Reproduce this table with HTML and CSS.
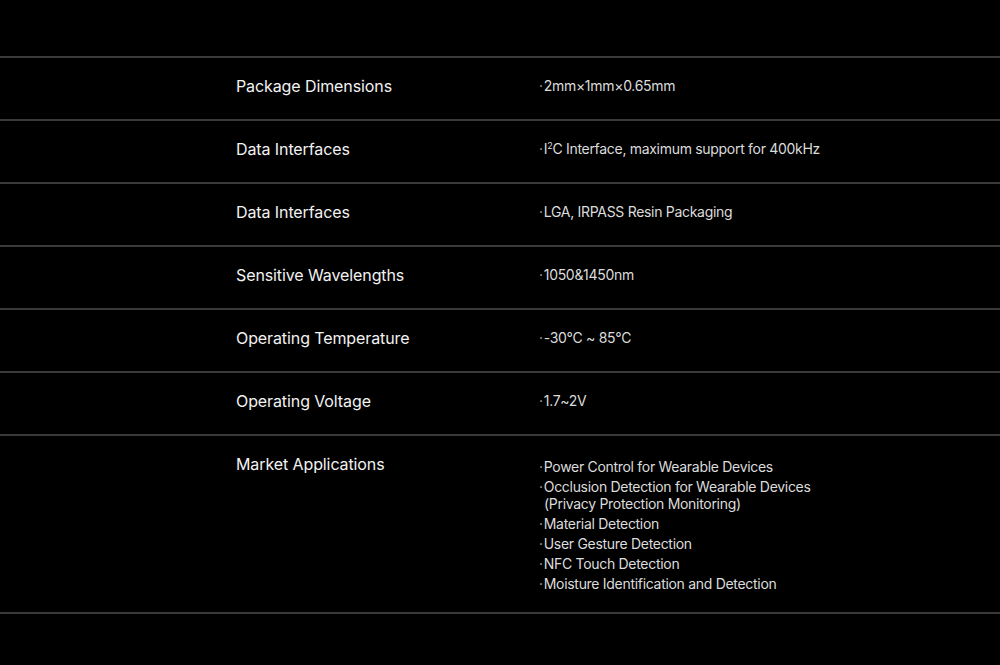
FILE: index.html
```html
<!DOCTYPE html>
<html lang="en">
<head>
<meta charset="utf-8">
<title>Specifications</title>
<link rel="stylesheet" href="styles.css">
</head>
<body>
<section class="specs">
  <div class="row">
    <div class="label">Package Dimensions</div>
    <div class="value"><span class="dot">·</span>2mm×1mm×0.65mm</div>
  </div>
  <div class="row">
    <div class="label">Data Interfaces</div>
    <div class="value"><span class="dot">·</span>I<sup>2</sup>C Interface, maximum support for 400kHz</div>
  </div>
  <div class="row">
    <div class="label">Data Interfaces</div>
    <div class="value"><span class="dot">·</span>LGA, IRPASS Resin Packaging</div>
  </div>
  <div class="row">
    <div class="label">Sensitive Wavelengths</div>
    <div class="value"><span class="dot">·</span>1050&amp;1450nm</div>
  </div>
  <div class="row">
    <div class="label">Operating Temperature</div>
    <div class="value"><span class="dot">·</span>-30°C ~ 85°C</div>
  </div>
  <div class="row">
    <div class="label">Operating Voltage</div>
    <div class="value"><span class="dot">·</span>1.7~2V</div>
  </div>
  <div class="row row-list">
    <div class="label">Market Applications</div>
    <ul class="list">
      <li>Power Control for Wearable Devices</li>
      <li>Occlusion Detection for Wearable Devices (Privacy Protection Monitoring)</li>
      <li>Material Detection</li>
      <li>User Gesture Detection</li>
      <li>NFC Touch Detection</li>
      <li>Moisture Identification and Detection</li>
    </ul>
  </div>
</section>
</body>
</html>
```
FILE: styles.css
```css
html, body {
  margin: 0;
  padding: 0;
  background: #000;
}
body {
  font-family: Inter, "Noto Sans", "Liberation Sans", sans-serif;
  color: #f0f0f0;
  width: 1000px;
  height: 665px;
  overflow: hidden;
}
.specs {
  padding-top: 56px;
}
.row {
  display: grid;
  grid-template-columns: 303px 1fr;
  padding: 17px 0 0 236px;
  height: 44px;
  border-top: 2px solid #3a3a3a;
}
.row-list {
  height: auto;
  padding-bottom: 17px;
  border-bottom: 2px solid #3a3a3a;
}
.label {
  font-size: 16px;
  line-height: 22px;
  letter-spacing: -0.1px;
  color: #f2f2f2;
}
.value {
  font-size: 14px;
  line-height: 22px;
  letter-spacing: -0.3px;
  color: #dcdcdc;
}
.dot {
  color: #aaa;
  margin-right: 1px;
}
.value sup {
  font-size: 9px;
  line-height: 0;
  vertical-align: 5px;
}
.list {
  list-style: none;
  margin: 0;
  padding: 5px 0 0 0;
  font-size: 14px;
  line-height: 17px;
  letter-spacing: -0.3px;
  color: #dcdcdc;
  width: 290px;
}
.list li {
  padding-left: 5px;
  text-indent: -5px;
  margin-bottom: 3px;
}
.list li::before {
  content: "·";
  color: #aaa;
  margin-right: 1px;
}
```
